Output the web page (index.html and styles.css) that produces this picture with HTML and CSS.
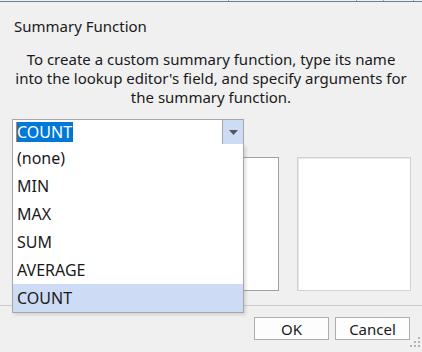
FILE: index.html
```html
<!DOCTYPE html>
<html lang="en">
<head>
    <meta charset="UTF-8">
    <meta name="viewport" content="width=device-width, initial-scale=1.0">
    <title>Summary Function</title>
    <link rel="stylesheet" href="styles.css">
</head>
<body>
    <div class="topline">
        <span class="tick t1"></span>
        <span class="tick t2"></span>
        <span class="tick t3"></span>
        <span class="tick t4"></span>
    </div>

    <div class="dialog">
        <h1 class="title">Summary Function</h1>

        <p class="hint">To create a custom summary function, type its name into the lookup editor's field, and specify arguments for the summary function.</p>

        <div class="combo-wrap">
            <div class="combo">
                <div class="combo-text"><span class="caret"></span><span class="selected">COUNT</span></div>
                <div class="combo-button">
                    <svg width="9" height="5" viewBox="0 0 9 5"><path d="M0 0 H9 L4.5 5 Z" fill="#555"/></svg>
                </div>
            </div>
            <ul class="dropdown">
                <li>(none)</li>
                <li>MIN</li>
                <li>MAX</li>
                <li>SUM</li>
                <li>AVERAGE</li>
                <li class="active">COUNT</li>
            </ul>
        </div>

        <div class="lists">
            <div class="list-box"></div>
            <div class="list-box disabled"></div>
        </div>
    </div>

    <div class="footer">
        <button class="btn">OK</button>
        <button class="btn">Cancel</button>
        <div class="grip">
            <svg width="14" height="12" viewBox="0 0 14 12">
                <g fill="#b4b4b4">
                    <rect x="10" y="0" width="2" height="2"/>
                    <rect x="6" y="4" width="2" height="2"/>
                    <rect x="10" y="4" width="2" height="2"/>
                    <rect x="2" y="8" width="2" height="2"/>
                    <rect x="6" y="8" width="2" height="2"/>
                    <rect x="10" y="8" width="2" height="2"/>
                </g>
            </svg>
        </div>
    </div>
</body>
</html>
```

FILE: styles.css
```css
body {
    margin: 0;
    padding: 0;
    width: 422px;
    height: 352px;
    overflow: hidden;
    background-color: #f0f0f0;
    font-family: "Noto Sans", "Open Sans", sans-serif;
    font-size: 15px;
    color: #1a1a1a;
}

.topline {
    position: relative;
    height: 1px;
    border-bottom: 1px solid #6f7f98;
}

.tick {
    position: absolute;
    top: 0;
    width: 1px;
    height: 1px;
    background: #9aa4b4;
}

.t1 { left: 228px; }
.t2 { left: 356px; }
.t3 { left: 383px; }
.t4 { left: 413px; }

.dialog {
    padding: 0 12px 0 12px;
}

.title {
    margin: 14px 0 0 2px;
    font-size: 15px;
    font-weight: normal;
    line-height: 20px;
}

.hint {
    margin: 14px 0 0 0;
    text-align: center;
    line-height: 19px;
}

.combo-wrap {
    position: relative;
    margin-top: 12px;
    width: 232px;
    font-size: 16px;
}

.combo {
    display: flex;
    height: 24px;
    border: 1px solid #a6a6a6;
    background: #fff;
}

.combo-text {
    flex: 1;
    display: flex;
    align-items: center;
    padding-left: 3px;
}

.caret {
    width: 1px;
    height: 20px;
    background: #e8742c;
}

.selected {
    background: #0078d7;
    color: #fff;
    line-height: 20px;
    padding-right: 1px;
}

.combo-button {
    width: 20px;
    border-left: 1px solid #a6a6a6;
    background: #cddcf4;
    display: flex;
    align-items: center;
    justify-content: center;
}

.dropdown {
    position: absolute;
    top: 25px;
    left: 0;
    z-index: 2;
    width: 230px;
    margin: 0;
    padding: 0;
    list-style: none;
    background: #fff;
    border: 1px solid #a6a6a6;
    border-top: none;
    box-shadow: 2px 2px 3px rgba(0, 0, 0, 0.12);
}

.dropdown li {
    height: 28px;
    line-height: 28px;
    padding-left: 4px;
}

.dropdown li.active {
    background: #cddcf4;
}

.lists {
    display: grid;
    grid-template-columns: 265px 114px;
    gap: 18px;
    margin-top: 12px;
    margin-left: 2px;
}

.list-box {
    height: 132px;
    background: #fff;
    border: 1px solid #a0a0a0;
}

.list-box.disabled {
    border-color: #d2d2d2;
    box-shadow: inset 1px 1px 0 #e6e6e6;
}

.footer {
    position: relative;
    display: flex;
    justify-content: flex-end;
    gap: 6px;
    margin-top: 14px;
    padding: 11px 12px 0 0;
    border-top: 1px solid #cbcbcb;
}

.btn {
    width: 75px;
    height: 23px;
    padding: 0;
    border: 1px solid #adadad;
    background: #fdfdfd;
    font-family: "Noto Sans", "Open Sans", sans-serif;
    font-size: 15px;
    color: #1a1a1a;
    line-height: 20px;
}

.grip {
    position: absolute;
    right: 0;
    bottom: -13px;
}
```
